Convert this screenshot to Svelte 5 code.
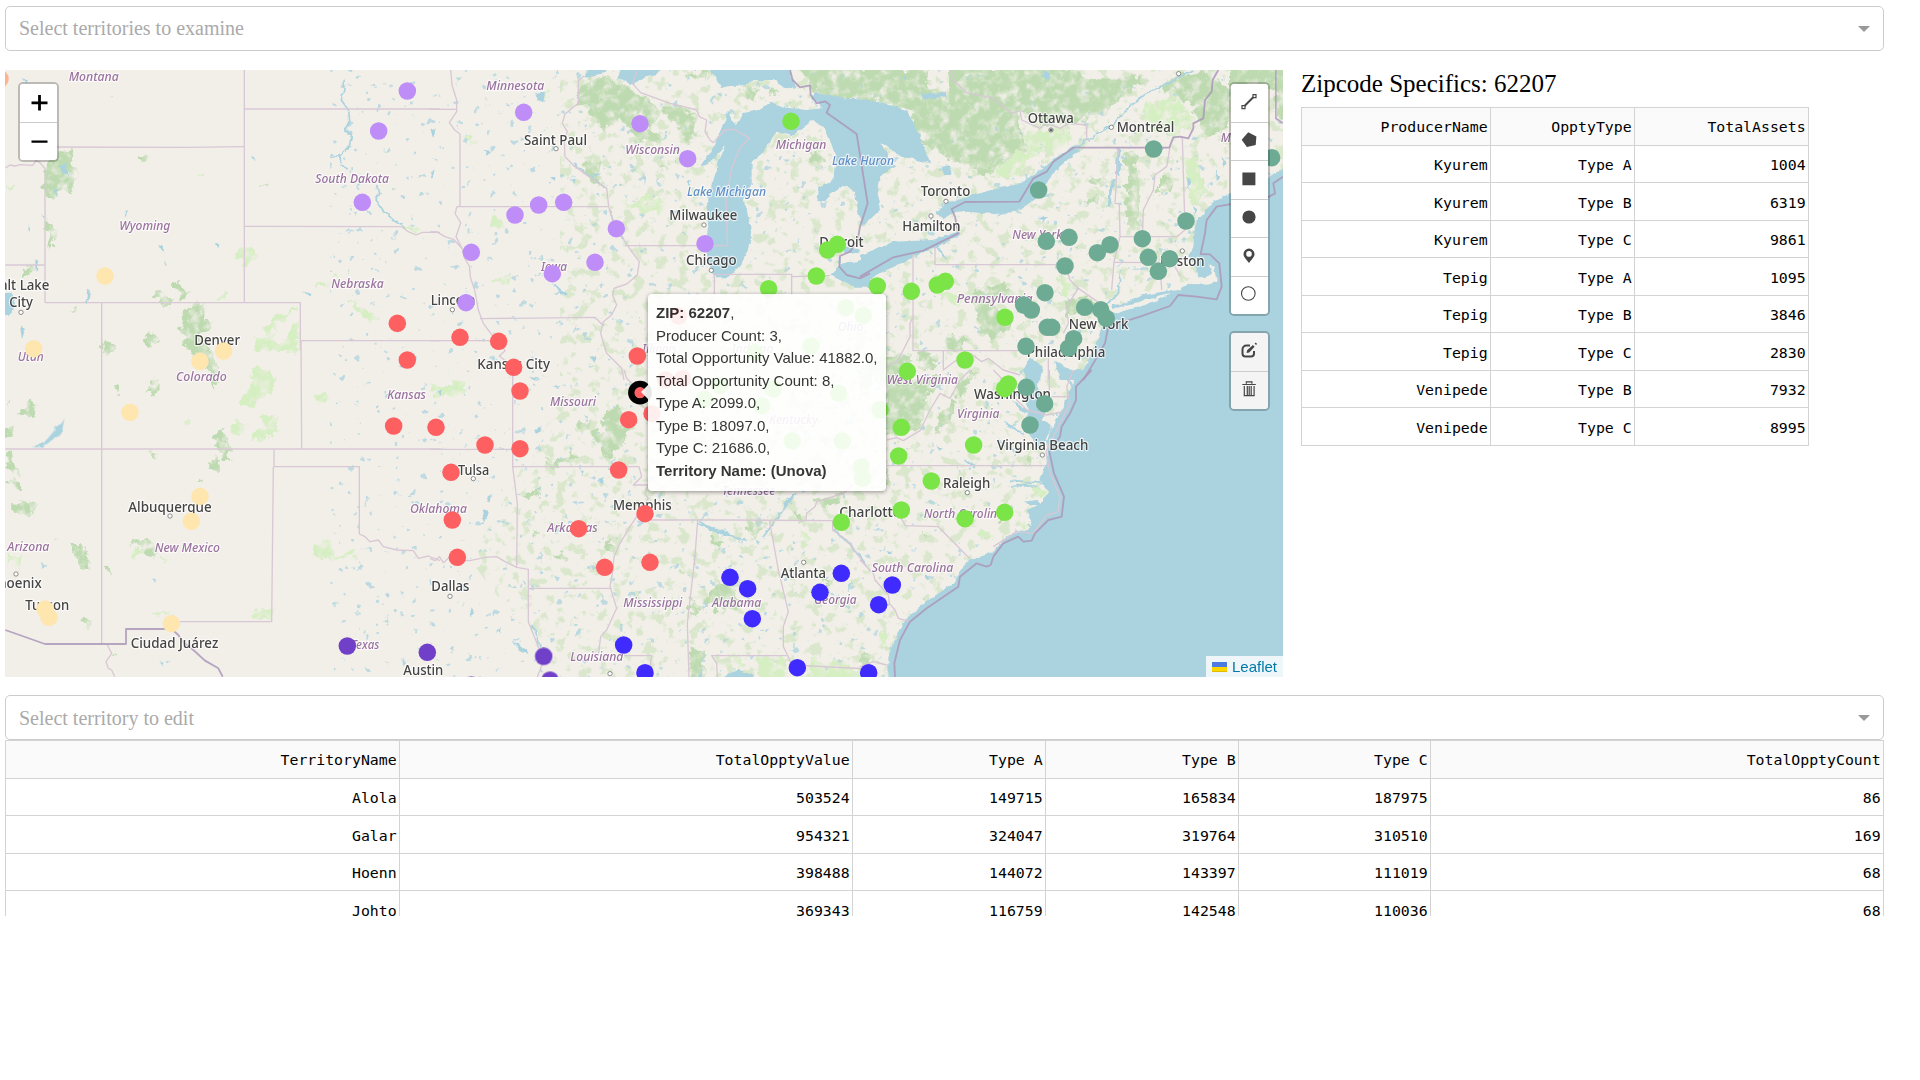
<script>
  const producers = [
    ['Kyurem', 'Type A', 1004],
    ['Kyurem', 'Type B', 6319],
    ['Kyurem', 'Type C', 9861],
    ['Tepig', 'Type A', 1095],
    ['Tepig', 'Type B', 3846],
    ['Tepig', 'Type C', 2830],
    ['Venipede', 'Type B', 7932],
    ['Venipede', 'Type C', 8995]
  ];
  const territories = [
    ['Alola', 503524, 149715, 165834, 187975, 86],
    ['Galar', 954321, 324047, 319764, 310510, 169],
    ['Hoenn', 398488, 144072, 143397, 111019, 68],
    ['Johto', 369343, 116759, 142548, 110036, 68]
  ];

  // The map is described in six sheets, each drawn at three units per pixel.
  const sheets = [
    {
      at: [0, 0],
      water: [
        '0,880 35,878 45,905 40,930 25,945 0,945',
        '180,500 195,490 208,525 190,520', '162,565 172,568 168,590', '106,782 116,782 114,812 106,805',
        '378,630 384,635 380,655 375,648', '478,735 492,738 490,762', '492,780 500,795 496,798',
        '648,730 658,728 655,742', '905,872 935,882 930,888', '60,980 75,990 66,1018', '122,635 138,662 130,655',
        '82,675 92,692 88,698', '262,865 270,870 263,915 258,905', '1290,390 1310,388 1300,410', '1290,520 1304,512 1298,535',
        '755,468 765,475 762,480', '66,232 84,244 80,250', '1060,232 1082,228 1070,236'
      ],
      rivers: [
        'M1029,242 L1032,270 L1024,300 L1045,330 L1050,365 L1035,395 L1055,400 L1048,440 L1025,465 L990,473 M1018,465 L1026,495 L1040,508',
        'M1130,555 L1136,580 L1128,600 L1150,632 L1175,655 L1205,674 L1215,682'
      ],
      forest: [
        '150,470 180,450 230,455 220,480 225,520 215,590 190,570 150,590 130,570 135,500',
        '140,660 158,680 166,740 150,745 143,700', '420,462 438,465 436,495 422,490',
        '515,850 535,843 560,865 562,900 540,905 535,880', '452,882 480,870 520,900 515,928 490,920 480,895',
        '560,925 600,905 620,940 632,990 600,1015 610,1050 560,1050 555,1010 525,990 560,970',
        '432,1020 455,1000 470,1015 460,1035', '78,800 100,800 98,825 75,835', '335,288 347,286 346,296 336,295',
        '780,546 805,545 800,556', '215,935 228,930 226,942', '1045,805 1055,815 1050,820', '310,1035 345,1035 345,1050 310,1050'
      ],
      meadow: [
        '715,745 750,735 768,755 766,780 740,790 712,770', '958,850 990,844 985,862 960,862', '995,825 1018,826 1015,834',
        '790,1000 840,940 890,920 896,925 830,970 800,1040 850,1020 895,960 896,1050 770,1050',
        '1040,900 1090,920 1140,955 1130,970 1085,950', '640,885 690,878 680,905 650,900', '1210,668 1250,680 1262,692 1240,700',
        '20,550 50,560 25,580', '600,520 618,530 605,540'
      ],
      borders: [
        'M733,210 V908', 'M135,441 L560,442 L733,440', 'M733,327 H1320', 'M733,679 L1205,680 L1225,695 L1248,705 L1268,697 L1320,697',
        'M16,504 L30,495 L45,498 L60,494 L98,496 L108,482 L120,488 L135,506 V908', 'M16,795 H135', 'M135,908 H901 V1050',
        'M305,908 V1050', 'M903,1022 H1320'
      ],
      frontier: [],
      towns: [[63, 937]]
    },
    {
      at: [430, 60],
      water: [
        '465,52 485,10 548,10 520,40', '562,58 580,10 705,10 680,42 640,50 610,74', '770,10 808,10 800,34',
        '822,10 860,58 872,80 950,75 965,60 1030,60 1065,80 1100,88 1085,55 1080,10',
        '810,318 848,268 862,235 895,152 905,180 920,200 940,160 985,150 1020,128 1055,142 1130,150 1175,145 1140,112 1160,95 1240,115 1320,120 1350,128 1430,150 1475,240 1500,310 1420,290 1350,250 1395,320 1355,345 1340,400 1350,450 1300,497 1285,460 1275,395 1240,375 1205,400 1190,425 1162,420 1168,385 1210,360 1218,290 1190,215 1150,180 1085,228 1040,215 1005,265 988,290 965,300 965,375 938,420 958,480 966,530 940,610 890,655 858,655 840,620 825,560 835,500 830,440 850,350 885,258 830,316',
        '316,98 345,95 340,125 320,120', '770,360 782,358 778,388', '640,330 648,350 645,375', '1235,560 1290,568 1285,580 1240,578',
        '1200,645 1232,615 1290,600 1320,585 1320,680 1270,680', '365,670 385,680 410,705 402,710', '420,360 440,355 435,370',
        '490,340 510,342 500,352', '360,352 378,350 374,362', '160,270 180,272 172,284', '478,890 500,888 495,905'
      ],
      rivers: ['M1228,590 L1230,612', 'M430,312 L470,340 L525,382', 'M540,445 L552,485 L580,540'],
      forest: [
        '445,75 500,45 560,60 620,95 660,120 680,160 670,200 590,200 570,170 540,205 500,200 480,150 445,135',
        '700,135 760,138 795,165 802,230 770,245 740,200 715,180', '600,205 640,200 700,225 690,245 610,240',
        '1105,20 1125,20 1330,20 1330,130 1240,115 1160,95 1140,70', '945,80 990,85 970,125 948,110', '1150,280 1195,290 1160,310 1130,305',
        '780,35 845,38 830,60 790,50', '460,300 520,310 500,340 520,380 470,350', '690,320 715,322 705,345', '1020,85 1050,95 1045,110 1020,105'
      ],
      meadow: [
        '350,80 362,95 350,118', '1215,140 1320,160 1380,190 1320,190 1235,165', '95,225 140,240 130,252', '185,655 245,650 240,668 190,668',
        '190,475 220,480 215,505 185,500', '580,430 700,410 690,460 600,450'
      ],
      borders: [
        'M0,148 H80', 'M62,30 L66,75 L80,120 V155 L58,188 L74,210 L90,222 V440', 'M80,440 H535',
        'M80,440 L76,462 L92,488 L78,530 L96,565 L104,595 L118,618 L122,655 L134,690 L145,750 L160,790 L182,820 L205,845',
        'M0,516 L20,515 L45,530 L70,538 L96,565', 'M0,842 H200', 'M205,845 L225,872 L208,888 L230,905 L248,935 V960',
        'M462,48 L445,62 V130 L405,162 L397,190 L412,215 L403,245 L405,290 L435,320 L480,352 L530,385 L536,440 L548,480 L585,545 L605,575 L628,605 L622,645 L590,672 L552,685 L548,705 L560,735 L545,765 L520,785 L512,820 L530,880 L575,925 L582,960',
        'M150,776 L495,772 L520,797', 'M622,32 L607,70 L632,98 L720,130 L800,150 L808,170 L830,180 L825,215 L840,240 L850,248 L885,210 L915,208 L958,235 L930,262 L905,325 L888,420 L893,557',
        'M585,557 H893', 'M853,705 V643 H1085 V705', 'M1085,650 L1200,647'
      ],
      frontier: [
        'M1080,30 L1088,60 L1110,82 L1140,76 L1142,105 L1160,130 L1185,124 L1200,135 L1190,158 L1280,222 L1313,430 L1290,500 L1283,540 L1260,575 L1230,588 L1228,620 L1250,645 L1290,655 L1320,640'
      ],
      towns: [[378, 266], [822, 495], [844, 631], [67, 749]]
    },
    {
      at: [860, 60],
      water: [
        '0,585 100,545 220,540 300,512 298,528 200,575 160,590 60,640 0,680', '225,458 270,425 400,388 480,372 530,340 575,300 640,262 662,268 580,340 530,415 470,455 400,462 320,455 270,462 250,475',
        '1320,300 1200,362 1160,385 1110,400 1060,425 1020,470 1005,500 1000,560 988,590 1010,625 1015,652 1042,650 1056,640 1046,612 1062,625 1070,662 1040,678 1000,668 960,690 905,695 850,706 760,738 730,790 700,870 650,970 1320,970',
        '180,100 255,100 260,112 190,118', '245,320 270,315 275,345 252,345', '535,470 565,472 550,482', '512,890 525,905 548,920 540,960 500,960 490,930',
        '770,265 782,262 778,350 768,340', '755,360 765,360 750,440 742,440', '585,905 640,935 665,925 640,960 600,960',
        '550,35 572,40 560,60 545,50', '980,350 992,370 985,390', '130,45 140,55 132,60', '1000,440 1012,448 1005,470', '1068,330 1080,350 1070,360', '1085,290 1100,310 1090,320'
      ],
      rivers: ['M640,262 L690,235 L760,190 L800,150 L850,105 L930,65 L1000,30', 'M782,630 L775,700 L720,760', 'M232,560 L262,600'],
      forest: [
        '0,20 205,20 205,90 265,95 270,20 640,20 690,60 830,45 870,65 800,100 740,150 640,190 560,190 500,165 470,150 500,260 440,300 380,350 300,310 270,300 190,245 150,150 60,120 0,105',
        '270,120 430,130 480,220 430,270 380,320 300,290 210,240', '690,350 730,355 722,378 695,372', '685,410 715,405 710,440 682,435',
        '795,270 835,275 830,340 840,400 830,500 800,510 795,440 810,380 795,330', '900,360 935,355 940,400 900,395',
        '980,90 1080,60 1110,90 1105,200 1040,230 1010,180', '900,70 1000,40 1060,30 1040,110 980,120 940,100', '1110,20 1245,20 1250,90 1110,70', '1250,20 1300,20 1300,190 1250,170',
        '350,690 440,670 460,700 400,720 390,740 460,780 450,810 400,840 350,800', '620,720 680,700 710,740 650,770 620,760',
        '0,915 60,890 150,880 150,970 80,970', '250,830 340,840 310,870 255,870', '690,570 720,590 700,600', '170,870 230,890 225,930 180,920'
      ],
      meadow: [
        '320,230 420,260 400,340 320,330', '850,130 960,110 1000,180 940,230 850,200', '590,640 640,670 620,700', '245,690 310,700 300,740 250,720',
        '500,220 620,200 640,235 560,280 500,290', '960,300 1010,280 1040,400 1000,440', '430,290 520,270 480,340 400,350'
      ],
      borders: [
        'M268,30 L285,65 L320,98 L400,115 L455,160 L480,152 L485,180 L540,205 L560,190 L600,205 L625,190 L680,195 L680,235 L690,245',
        'M225,560 V614 H615 L630,660 L655,685 L720,730', 'M159,580 V872 H480', 'M775,262 L765,430 L778,432 L780,530 H950 L975,510',
        'M780,530 L762,605 L755,690', 'M762,607 L900,608 L940,612 L962,650', 'M900,608 L905,690', 'M930,262 L920,320 L885,345 L880,390 L850,450 L847,530',
        'M967,232 L975,510', 'M655,685 L620,740 L625,790 L610,820', 'M159,770 L150,790 L150,830 L130,870 L110,905 L80,920',
        'M250,872 V930 L290,900 L330,880 L365,905 L385,895 L430,930 L480,945', 'M480,872 H565 V960'
      ],
      frontier: [
        'M0,650 L100,592 L190,572 L295,520 L285,470 L275,447 L315,426 L478,425 L505,380 L520,355 L560,335 L580,305 L640,263 H928 L940,232 L960,230 L985,235 L1000,205 L1000,190 L1030,175 L1035,120 L1055,95 L1058,60 L1075,30',
        'M1247,30 V175 L1269,190',
        'M1269,350 L1240,370 L1245,400 L1200,425 L1108,433 L1070,440 L1040,480 L1035,520 L1022,582 L1050,583 L1078,610 L1085,680 L1070,718 L1010,710 L955,705 L930,738 L840,770 L745,800 L735,850 L712,890 L670,960'
      ],
      towns: [[754, 202], [573, 210], [258, 424], [213, 468], [967, 573], [956, 41]]
    },
    {
      at: [0, 340],
      water: ['95,325 130,310 165,270 190,235 180,290 155,300 125,325', '120,668 142,678 130,682', '500,960 515,962 505,968', '480,965 490,968 485,980', '460,715 468,718 464,730', '1290,840 1305,855 1298,860', '1155,760 1168,760 1165,772', '1205,750 1215,755 1208,765', '1190,420 1200,420 1196,426', '1207,955 1217,965 1210,980', '1095,885 1108,890 1100,900'],
      rivers: [],
      forest: [
        '560,0 620,0 640,60 655,95 645,160 635,100 600,70 580,40', '310,15 335,5 342,30 320,50 305,35', '440,130 470,120 482,145 465,165 440,155', '340,150 365,150 360,168 345,165',
        '75,190 95,170 112,220 60,230', '18,260 42,255 38,290 20,290', '18,345 40,330 50,380 55,410 30,400', '20,420 75,435 75,455 50,455', '40,490 70,480 105,495 100,520 60,520 40,510',
        '640,300 665,265 680,300 695,330 690,360 665,360', '640,345 665,370 655,410 632,380', '385,610 430,598 470,605 465,640 440,650 430,625',
        '205,610 260,630 270,690 240,680 225,645', '318,675 330,680 335,695 318,695', '252,825 268,845 262,868 248,850', '340,935 352,945 340,950', '160,590 170,600 165,605', '445,330 468,335 460,350', '20,180 33,185 20,205', '595,415 608,422 602,428', '435,5 480,0 478,18 455,18'
      ],
      meadow: [
        '750,130 770,80 815,95 838,130 820,155 780,170 760,200 720,195', '800,220 830,225 832,290 755,305 770,270', '690,260 710,240 742,262 715,285', '385,635 440,625 430,645 390,655',
        '945,610 985,600 1000,650 1070,630 1070,655 1000,655 948,655', '765,812 815,805 815,842 762,840', '945,165 982,168 982,190 945,190', '770,0 900,0 895,30 840,40 790,30', '30,645 75,650 60,690 25,660',
        '485,660 500,660 490,685', '458,825 500,815 520,830 480,835', '545,240 575,240 570,262 545,255'
      ],
      borders: [
        'M903,0 L905,327', 'M16,327 H1320', 'M822,327 V380 H1078 V582 L1095,590 L1110,605 L1135,600 L1150,620 L1190,630 L1240,632 L1255,655 L1285,648 L1320,662',
        'M820,380 L815,845 H540', 'M305,0 V912', 'M322,915 L335,940 L318,965 L325,985 L335,990 L344,1010'
      ],
      frontier: ['M16,870 L135,912 H378 V867 H515 L535,885 L548,905 L580,930 L615,962 L655,985 L668,1010'],
      towns: [[510, 528], [48, 702]]
    },
    {
      at: [430, 370],
      water: [
        '312,180 330,165 335,180 318,188', '155,420 175,425 162,455', '250,815 290,840 295,855 265,840', '800,445 840,470 900,490 890,498 830,478', '800,940 815,885 822,940',
        '850,940 900,910 925,900 970,915 960,940', '170,385 185,375 178,395', '90,640 110,650 100,665', '120,715 135,730 124,738', '20,60 35,58 30,75', '300,20 340,30 305,28', '450,300 462,298 455,320', '505,330 520,325 515,345',
        '1060,400 1095,370 1090,385 1065,415', '205,780 215,770 212,790'
      ],
      rivers: ['M305,765 L322,795 L330,830', 'M800,460 L850,480 L905,495 L950,515', 'M1210,480 L1255,515 L1310,590', 'M1000,500 L1060,420 L1095,370'],
      forest: [
        '520,130 570,110 600,180 580,230 560,240 555,270 530,265 500,210 480,190 520,180', '440,150 480,150 470,180 445,175', '360,270 400,260 430,240 450,255 400,285 365,290', '290,370 325,362 330,380 300,388',
        '540,495 550,515 545,555 535,540', '380,545 415,555 410,575 390,570', '945,460 1010,450 1000,480 970,500 950,480', '1155,385 1235,370 1240,385 1190,405 1160,400', '850,505 885,520 875,535 850,520',
        '780,680 815,720 780,725', '850,660 900,635 935,700 920,720 850,710 830,690', '780,845 825,845 820,940 785,940', '1290,855 1320,855 1320,880 1290,880', '1100,425 1125,435 1118,460 1100,455', '740,600 755,598 745,610',
        '1170,600 1200,640 1180,650', '305,480 330,485 315,495'
      ],
      meadow: ['0,50 60,40 110,30 100,70 20,85', '1110,490 1150,500 1120,530', '890,845 950,880 920,900', '1150,870 1320,900 1320,940 1120,940', '980,855 1070,870 1060,940 990,940'],
      borders: [
        'M0,238 H245', 'M248,0 V290 L262,400 L260,590', 'M0,565 L15,572 L28,560 L40,578 L60,560 L82,570 L120,572 L165,562 L200,560 L225,575 L260,592 L295,598 V755 L325,830 L338,880 L322,921',
        'M248,290 H627 L635,320 L610,345 L655,345 L645,370 L655,385 L640,410 L620,440 L600,470 L570,520 L552,560 L548,605 L540,650 L560,715 L530,780 L512,800 L505,857',
        'M297,655 H545', 'M640,450 L900,450 L1208,452', 'M803,450 L795,560 L772,760 L777,921', 'M1018,450 L1045,600 L1075,725 L1060,770 L1060,830 L1075,860 L1085,885 L1320,897', 'M862,921 L860,880 L845,857 H1070',
        'M582,857 H665 L655,921', 'M582,0 L590,25 L625,60 L632,100 L670,150', 'M1208,452 V480 L1250,510 L1310,590', 'M1128,450 L1130,430 L1155,410 L1160,395 L1240,370 L1320,300'
      ],
      frontier: [],
      towns: [[130, 326], [60, 679], [1121, 577], [540, 911]]
    },
    {
      at: [860, 370],
      water: [
        '655,0 630,60 605,120 580,170 560,215 560,280 540,330 567,365 545,400 500,420 515,470 440,500 390,550 320,575 280,640 200,695 140,745 105,800 85,860 85,960 1320,960 1320,0',
        '505,0 540,0 530,50 560,110 545,150 575,165 545,240 510,200 485,170 505,130 490,60', '455,90 490,110 510,130 490,130', '440,350 500,340 540,355 500,350', '490,395 530,390 545,405 505,405',
        '195,615 206,615 204,632', '80,540 100,545 85,552', '225,225 248,235 238,242'
      ],
      rivers: ['M0,570 L18,588', 'M310,270 L345,290', 'M415,210 L475,250', 'M430,155 L490,190', 'M450,330 L545,340', 'M500,460 L515,480', 'M575,170 L560,240', 'M600,0 L640,52'],
      forest: [
        '30,0 60,45 180,30 260,15 200,80 175,180 110,200 80,190 80,60', '240,130 290,90 285,140 220,190', '290,60 335,0 350,0 300,85', '0,0 50,0 30,50 0,60', '190,490 210,490 205,500', '0,856 30,856 30,878 0,878', '500,260 515,265 510,290 498,285',
        '80,300 88,340 70,370', '420,455 436,450 434,468'
      ],
      meadow: ['520,350 565,360 545,385 515,375', '65,790 85,800 70,840 60,820', '480,455 510,455 500,475', '350,480 400,495 370,510'],
      borders: [
        'M80,287 H560', 'M120,440 L137,467 L235,470 L330,567', 'M575,80 H625', 'M80,210 L110,203 L130,212 L180,182 L210,120 L240,70 L270,85 L300,30 L330,0', 'M0,570 L40,610 L45,630 L85,675 L88,700 L105,720 L115,745 L150,755',
        'M0,890 L40,875 L80,885', 'M568,0 V80', 'M400,0 L420,20 L450,70 L500,120 L560,135 L610,125', 'M640,0 L620,50 L630,100 L595,170 L558,245 L570,310 L600,380 L595,425 L560,435 L520,490 L470,485 L400,530'
      ],
      frontier: ['M695,0 L648,50 V90 L630,130 L605,170 L600,200 L568,245 L582,310 L612,380 L605,440 L565,450 L525,490 L515,512 L490,515 L475,500 L430,520 L400,560 L392,585 L380,590 L350,580 L300,620 L295,650 L200,715 L150,755 L120,810 L103,880 L105,921'],
      towns: [[547, 255], [322, 368]]
    }
  ];

  // [text, left, right, baseline, kind]; kind c = city, s = state, l = lake
  const labels = [
    ['Montana', 206, 356, 244, 's'], ['South Dakota', 946, 1167, 550, 's'], ['Wyoming', 358, 511, 690, 's'], ['Nebraska', 994, 1151, 865, 's'],
    ['Salt Lake', -22, 148, 870, 'c'], ['City', 28, 99, 921, 'c'], ['Denver', 583, 720, 1035, 'c'],
    ['Utah', 53, 131, 1084, 's'], ['Colorado', 528, 680, 1143, 's'], ['Kansas', 1162, 1278, 1198, 's'], ['Albuquerque', 385, 635, 1536, 'c'],
    ['New Mexico', 464, 660, 1655, 's'], ['Arizona', 22, 148, 1654, 's'], ['Phoenix', -30, 125, 1764, 'c'], ['Tucson', 76, 208, 1829, 'c'],
    ['Ciudad Juárez', 392, 655, 1945, 'c'], ['Texas', 1053, 1138, 1948, 's'], ['Austin', 1210, 1330, 2024, 'c'], ['Oklahoma', 1230, 1401, 1540, 's'],
    ['Minnesota', 1459, 1633, 270, 's'], ['Saint Paul', 1572, 1761, 434, 'c'], ['Wisconsin', 1876, 2040, 462, 's'], ['Michigan', 2327, 2479, 446, 's'],
    ['Lake Huron', 2496, 2682, 494, 'l'], ['Lake Michigan', 2061, 2298, 589, 'l'], ['Milwaukee', 2008, 2212, 660, 'c'], ['Chicago', 2058, 2210, 796, 'c'],
    ['Detroit', 2458, 2591, 742, 'c'], ['Iowa', 1623, 1701, 813, 's'], ['Lincoln', 1292, 1426, 916, 'c'], ['Kansas City', 1432, 1650, 1107, 'c'],
    ['Illinois', 1927, 2030, 1058, 's'], ['Indiana', 2195, 2320, 1058, 's'], ['Ohio', 2514, 2590, 992, 's'],
    ['Ottawa', 3083, 3221, 369, 'c'], ['Montréal', 3350, 3523, 397, 'c'], ['Toronto', 2762, 2911, 588, 'c'], ['Hamilton', 2707, 2882, 694, 'c'],
    ['New York', 3037, 3187, 716, 's'], ['Pennsylvania', 2870, 3098, 908, 's'], ['New York', 3206, 3385, 986, 'c'], ['Boston', 3480, 3614, 798, 'c'],
    ['Philadelphia', 3080, 3316, 1072, 'c'], ['Maine', 3662, 3762, 427, 's'],
    ['Missouri', 1650, 1788, 1218, 's'], ['Tulsa', 1374, 1468, 1424, 'c'], ['Memphis', 1839, 2015, 1529, 'c'], ['Arkansas', 1642, 1793, 1597, 's'],
    ['Mississippi', 1870, 2047, 1820, 's'], ['Alabama', 2136, 2284, 1820, 's'], ['Atlanta', 2342, 2478, 1733, 'c'], ['Georgia', 2442, 2570, 1811, 's'],
    ['Louisiana', 1711, 1870, 1984, 's'], ['Tennessee', 2166, 2326, 1486, 's'], ['Kentucky', 2307, 2454, 1273, 's'], ['Dallas', 1294, 1408, 1773, 'c'],
    ['Charlotte', 2518, 2702, 1552, 'c'], ['West Virginia', 2660, 2874, 1153, 's'], ['Washington', 2922, 3153, 1197, 'c'], ['Virginia', 2871, 2998, 1254, 's'],
    ['Virginia Beach', 2991, 3265, 1350, 'c'], ['Raleigh', 2829, 2971, 1463, 'c'], ['North Carolina', 2771, 3012, 1555, 's'], ['South Carolina', 2615, 2860, 1715, 's']
  ];

  const groups = [
    { color: '#fdb38f', at: [0, 0], pts: [[0, 237]] },
    { color: '#be8df8', at: [0, 0], pts: [[1222, 273], [1136, 393], [1087, 607]] },
    { color: '#be8df8', at: [430, 60], pts: [[281, 157], [630, 191], [773, 296], [326, 435], [401, 427], [255, 465], [559, 506], [825, 551], [124, 577], [495, 607], [367, 641], [108, 728]] },
    { color: '#fee6ae', at: [0, 0], pts: [[315, 828]] },
    { color: '#fee6ae', at: [0, 340], pts: [[101, 26], [600, 64], [671, 33], [390, 217], [600, 469], [574, 544], [135, 807], [147, 832], [514, 851]] },
    { color: '#fe6062', at: [0, 0], pts: [[1192, 970]] },
    { color: '#fe6062', at: [0, 340], pts: [[1222, 60], [1181, 258], [1308, 262]] },
    { color: '#fe6062', at: [430, 60], pts: [[90, 832], [206, 844], [251, 922], [622, 888], [746, 768], [707, 960], [758, 956]] },
    { color: '#fe6062', at: [430, 370], pts: [[270, 63], [596, 149], [666, 131], [165, 225], [270, 236], [566, 300], [63, 307], [645, 431], [67, 450], [446, 476], [82, 562], [524, 592], [660, 577]] },
    { color: '#7be548', at: [430, 60], pts: [[1083, 184], [1222, 553], [1193, 570], [1159, 648], [1016, 686], [1248, 743], [1300, 766], [975, 877], [1143, 858]] },
    { color: '#7be548', at: [430, 370], pts: [[1234, 457], [1087, 213], [1237, 213], [1226, 70], [1294, 290], [1298, 325], [1030, 57], [996, 107], [824, 87], [870, 47]] },
    { color: '#7be548', at: [860, 60], pts: [[52, 678], [154, 694], [232, 675], [256, 664], [435, 772], [315, 900], [142, 934]] },
    { color: '#7be548', at: [860, 370], pts: [[445, 42], [434, 56], [124, 172], [116, 258], [341, 225], [214, 333], [124, 420], [434, 427], [315, 446], [60, 120]] },
    { color: '#6eab94', at: [860, 60], pts: [[881, 267], [1235, 293], [536, 390], [559, 544], [627, 532], [978, 483], [847, 536], [865, 592], [929, 596], [895, 634], [750, 554], [712, 578], [615, 618], [555, 698], [491, 735], [514, 750], [674, 742], [722, 749], [739, 775], [562, 802], [575, 802], [498, 859], [641, 836], [626, 864]] },
    { color: '#6eab94', at: [860, 370], pts: [[499, 52], [554, 101], [510, 165]] },
    { color: '#402bff', at: [430, 370], pts: [[900, 622], [953, 656], [967, 746], [581, 825], [645, 908], [1102, 893], [1316, 908], [1234, 610], [1170, 667]] },
    { color: '#402bff', at: [860, 370], pts: [[97, 645], [56, 704]] },
    { color: '#7041c8', at: [0, 340], pts: [[1042, 918], [1282, 937]] },
    { color: '#7041c8', at: [430, 370], pts: [[341, 859], [360, 930], [124, 945]] }
  ];
  const place = (s) => `translate(${s.at[0]} ${s.at[1]}) scale(.33333)`;
</script>

<main>
  <div class="select"><span>Select territories to examine</span><i></i></div>

  <section class="middle">
    <div class="map">
      <svg class="canvas" viewBox="5 70 1278 607" width="1278" height="607">
        <defs>
          <filter id="coast" x="-5%" y="-5%" width="110%" height="110%">
            <feTurbulence type="fractalNoise" baseFrequency="0.12" numOctaves="3" seed="4" />
            <feDisplacementMap in="SourceGraphic" scale="5" xChannelSelector="R" yChannelSelector="G" />
          </filter>
          <filter id="woods" x="-5%" y="-5%" width="110%" height="110%" color-interpolation-filters="sRGB">
            <feTurbulence type="fractalNoise" baseFrequency="0.1" numOctaves="4" seed="9" result="n" />
            <feDisplacementMap in="SourceGraphic" in2="n" scale="16" xChannelSelector="R" yChannelSelector="G" result="d" />
            <feColorMatrix in="n" type="matrix" values="0 0 0 0 0  0 0 0 0 0  0 0 0 0 0  2.6 0 0 0 -0.45" result="m" />
            <feComposite in="d" in2="m" operator="in" />
          </filter>
          <filter id="specks" x="0" y="0" width="100%" height="100%">
            <feTurbulence type="fractalNoise" baseFrequency="0.09" numOctaves="4" seed="21" />
            <feColorMatrix type="matrix" values="0 0 0 0 0.6  0 0 0 0 0.77  0 0 0 0 0.5  0 9 0 0 -5" />
            <feComposite in2="SourceGraphic" operator="in" />
          </filter>
          <filter id="ponds" x="0" y="0" width="100%" height="100%">
            <feTurbulence type="fractalNoise" baseFrequency="0.11" numOctaves="3" seed="33" />
            <feColorMatrix type="matrix" values="0 0 0 0 0.4  0 0 0 0 0.65  0 0 0 0 0.74  0 0 16 0 -11.2" />
            <feComposite in2="SourceGraphic" operator="in" />
          </filter>
        </defs>
        <rect x="5" y="70" width="1278" height="607" fill="#f2efe9" />
        <polygon class="speckled" points="560,70 1283,70 1283,400 1060,400 1030,530 900,677 560,677 470,560 560,400" />
        <rect class="ponded" x="330" y="70" width="953" height="607" />
        <g filter="url(#woods)">
          {#each sheets as s}
            <g transform={place(s)}>
              {#each s.meadow as p}<polygon points={p} fill="#d5eec2" />{/each}
              {#each s.forest as p}<polygon points={p} fill="#bddab0" />{/each}
            </g>
          {/each}
        </g>
        <g filter="url(#coast)">
          {#each sheets as s}
            <g transform={place(s)}>
              {#each s.water as p}<polygon points={p} fill="#aad3df" />{/each}
              {#each s.rivers as d}<path {d} class="river" />{/each}
            </g>
          {/each}
          <path class="island" d="M1108,310 L1130,304 L1165,295 L1172,294 L1145,305 L1114,314 Z" />
        </g>
        {#each sheets as s}
          <g transform={place(s)}>
            {#each s.borders as d}<path {d} class="state" />{/each}
            {#each s.frontier as d}<path {d} class="nation" />{/each}
            {#each s.towns as t}<circle class="town" cx={t[0]} cy={t[1]} r="6.5" />{/each}
          </g>
        {/each}
        <circle cx="1051" cy="130" r="1.6" fill="#666" />
        <g transform="scale(.33333)">
          {#each labels as l}
            <text class={l[4]} x={l[1]} y={l[3]} textLength={l[2] - l[1]} lengthAdjust="spacingAndGlyphs">{l[0]}</text>
          {/each}
        </g>
        {#each groups as g}
          <g transform={place(g)} fill={g.color}>
            {#each g.pts as p}<circle cx={p[0]} cy={p[1]} r="26.3" />{/each}
          </g>
        {/each}
        <circle cx="640" cy="392.7" r="8.75" fill="#fe6062" stroke="#000" stroke-width="6.3" />
      </svg>

      <div class="bar zoom">
        <button aria-label="Zoom in"><svg viewBox="0 0 38 38"><path d="M11.5 18.8h16M19.5 11v15.500" stroke="#000" stroke-width="2.8" /></svg></button>
        <button aria-label="Zoom out"><svg viewBox="0 0 38 38"><path d="M11.500 19.600h16" stroke="#000" stroke-width="2.400" /></svg></button>
      </div>

      <div class="bar draw">
        <button aria-label="Polyline"><svg viewBox="0 0 38 38"><path d="M14 23.5l9.5-9.5" stroke="#464646" stroke-width="1.9" /><path d="M12 22.6h3v3h-3zM23 11.6h3v3h-3z" fill="#fff" stroke="#464646" stroke-width="1.2" /></svg></button>
        <button aria-label="Polygon"><svg viewBox="0 0 38 38"><path d="M18.2 11.3l8.2 4.2-.7 8.4-8.8 2-5.2-7.2z" fill="#464646" /></svg></button>
        <button aria-label="Rectangle"><svg viewBox="0 0 38 38"><path d="M12.4 12.6h13v12.6h-13z" fill="#464646" /></svg></button>
        <button aria-label="Circle"><svg viewBox="0 0 38 38"><circle cx="19" cy="19" r="6.6" fill="#464646" /></svg></button>
        <button aria-label="Marker"><svg viewBox="0 0 38 38"><path fill-rule="evenodd" d="M19 11.6a5.5 5.5 0 0 0-5.5 5.5c0 3.2 3 5.4 5.5 9 2.5-3.6 5.5-5.8 5.5-9A5.5 5.5 0 0 0 19 11.6zm0 2.500a2.800 2.800 0 1 1 0 5.600a2.800 2.800 0 0 1 0-5.600z" fill="#464646" /></svg></button>
        <button aria-label="Circle marker"><svg viewBox="0 0 38 38"><circle cx="18.3" cy="18.5" r="6.8" fill="none" stroke="#464646" stroke-width="1.1" /></svg></button>
      </div>

      <div class="bar edit">
        <button aria-label="Edit layers"><svg viewBox="0 0 38 38"><path d="M20 13.5h-3.5a4 4 0 0 0-4 4v4a3 3 0 0 0 3 3h5.500a3 3 0 0 0 3-3v-2.500" fill="none" stroke="#464646" stroke-width="2" /><path d="M16.500 21l.6-2.800 5.800-5.200 1.700 1.700-5.400 5.700zM24.600 11.600l1.200-1 1.300 1.300-1.100 1.200z" fill="#464646" /></svg></button>
        <button aria-label="Delete layers"><svg viewBox="0 0 38 38"><path d="M12.300 14.500h13.500M16.300 13.800v-2h5.600v2M14.300 16v9.600h9.800V16M17.300 16v9.500M19.200 16v9.500M21.200 16v9.500" fill="none" stroke="#464646" stroke-width="1.200" /></svg></button>
      </div>

      <div class="tip">
        <b>ZIP: 62207</b>,<br />
        Producer Count: 3,<br />
        Total Opportunity Value: 41882.0,<br />
        Total Opportunity Count: 8,<br />
        Type A: 2099.0,<br />
        Type B: 18097.0,<br />
        Type C: 21686.0,<br />
        <b>Territory Name: (Unova)</b>
      </div>

      <div class="credit">
        <svg width="15" height="10" viewBox="0 0 15 10"><path d="M0 0h15v5H0z" fill="#4c7be1" /><path d="M0 5h15v5H0z" fill="#ffd500" /><path d="M0 9h15v1H0z" fill="#e0bc00" /></svg>
        <span>Leaflet</span>
      </div>
    </div>

    <aside>
      <h1>Zipcode Specifics: 62207</h1>
      <div class="grid specifics">
        <div class="row head"><span>ProducerName</span><span>OpptyType</span><span>TotalAssets</span></div>
        {#each producers as r}
          <div class="row">{#each r as v}<span>{v}</span>{/each}</div>
        {/each}
      </div>
    </aside>
  </section>

  <div class="select second"><span>Select territory to edit</span><i></i></div>
  <div class="clip">
    <div class="grid totals">
      <div class="row head"><span>TerritoryName</span><span>TotalOpptyValue</span><span>Type A</span><span>Type B</span><span>Type C</span><span>TotalOpptyCount</span></div>
      {#each territories as r}
        <div class="row">{#each r as v}<span>{v}</span>{/each}</div>
      {/each}
    </div>
  </div>
</main>

<style>
  :global(body) { margin: 0; background: #fff; overflow: hidden; }
  main { width: 1879px; padding: 6px 0 0 5px; color: #000; font-family: 'Liberation Serif', serif; }
  .select { height: 45px; box-sizing: border-box; border: 1px solid #ccc; border-radius: 5px; display: flex; align-items: center; justify-content: space-between; padding: 0 13px 0 13px; font-size: 20px; line-height: 43px; color: #aaa; }
  .select i { border: 6px solid transparent; border-top-color: #999; border-bottom: 0; margin-top: 1px; }
  .middle { display: flex; gap: 18px; margin-top: 19px; height: 607px; }
  .second { margin-top: 18px; }
  .second span { padding-top: 1px; }
  .map { position: relative; width: 1278px; height: 607px; overflow: hidden; flex: none; font-family: 'Liberation Sans', Arial, sans-serif; }
  .canvas { display: block; }
  .speckled { filter: url(#specks); opacity: .6; }
  .ponded { filter: url(#ponds); opacity: .7; }
  .river { fill: none; stroke: #aad3df; stroke-width: 5; }
  .island { fill: #f2efe9; }
  .state { fill: none; stroke: #d8c8d5; stroke-width: 4; stroke-linejoin: round; }
  .nation { fill: none; stroke: #ab98b8; stroke-width: 5.5; stroke-linejoin: round; opacity: .85; }
  .town { fill: #fff; stroke: #777; stroke-width: 2.5; }
  text { font-family: 'Noto Sans', sans-serif; font-size: 41px; paint-order: stroke; stroke: rgba(255, 255, 255, .7); stroke-width: 7px; stroke-linejoin: round; }
  text.c { fill: #444; font-weight: 500; }
  text.s { fill: #9a739f; font-style: italic; font-weight: 500; font-size: 39px; }
  text.l { fill: #628fc8; font-style: italic; font-weight: 500; font-size: 39px; }
  .bar { position: absolute; box-sizing: border-box; width: 41px; border: 2px solid rgba(0, 0, 0, .22); border-radius: 5px; background-clip: padding-box; overflow: hidden; display: flex; flex-direction: column; }
  .bar button { flex: 1; min-height: 0; padding: 0; margin: 0; border: 0; background: #fff; border-bottom: 1px solid #ccc; display: flex; align-items: center; justify-content: center; }
  .bar button:last-child { border-bottom: 0; }
  .bar button svg { width: 38px; height: 38px; flex: none; }
  .zoom { left: 13px; top: 12px; height: 80px; }
  .draw { left: 1224px; top: 12px; height: 234px; }
  .edit { left: 1224px; top: 261px; height: 80px; }
  .draw svg, .edit svg { margin: 0 1px 2px 0; }
  .edit button { background: #f4f4f4; }
  .tip { position: absolute; left: 643px; top: 224px; width: 238px; height: 197px; box-sizing: border-box; padding: 8px 0 0 8px; background: #fff; opacity: .9; border-radius: 4px; box-shadow: 0 1px 4px rgba(0, 0, 0, .45); font-size: 15px; line-height: 22.5px; color: #222; white-space: nowrap; }
  .tip::before { content: ''; position: absolute; left: -7px; top: 91px; border: 7px solid transparent; border-right-color: #fff; border-left: 0; }
  .credit { position: absolute; right: 0; bottom: 0; width: 77px; height: 21px; background: rgba(255, 255, 255, .8); display: flex; align-items: center; gap: 5px; padding-left: 6px; box-sizing: border-box; font-size: 15px; line-height: 21px; color: #0078a8; }
  h1 { margin: 0; font-size: 25px; font-weight: 400; line-height: 28px; padding-bottom: 9.25px; white-space: nowrap; }
  .grid { font-family: 'DejaVu Sans Mono', monospace; font-size: 14.84px; border-right: 1px solid #d3d3d3; box-sizing: border-box; }
  .row { display: grid; height: 37.5px; }
  .row span { box-sizing: border-box; height: 37.5px; border-top: 1px solid #d3d3d3; border-left: 1px solid #d3d3d3; text-align: right; padding: 1.7px 2.4px 0 0; line-height: 36.5px; }
  .head span { background: #fafafa; padding-top: 1px; }
  .specifics { width: 508px; border-bottom: 1px solid #d3d3d3; }
  .specifics .row { grid-template-columns: 189px 144px 1fr; }
  .clip { height: 176px; overflow: hidden; padding-top: .2px; }
  .totals { width: 1879px; }
  .totals .row { grid-template-columns: 394px 453px 193px 193px 192px 1fr; }
</style>
